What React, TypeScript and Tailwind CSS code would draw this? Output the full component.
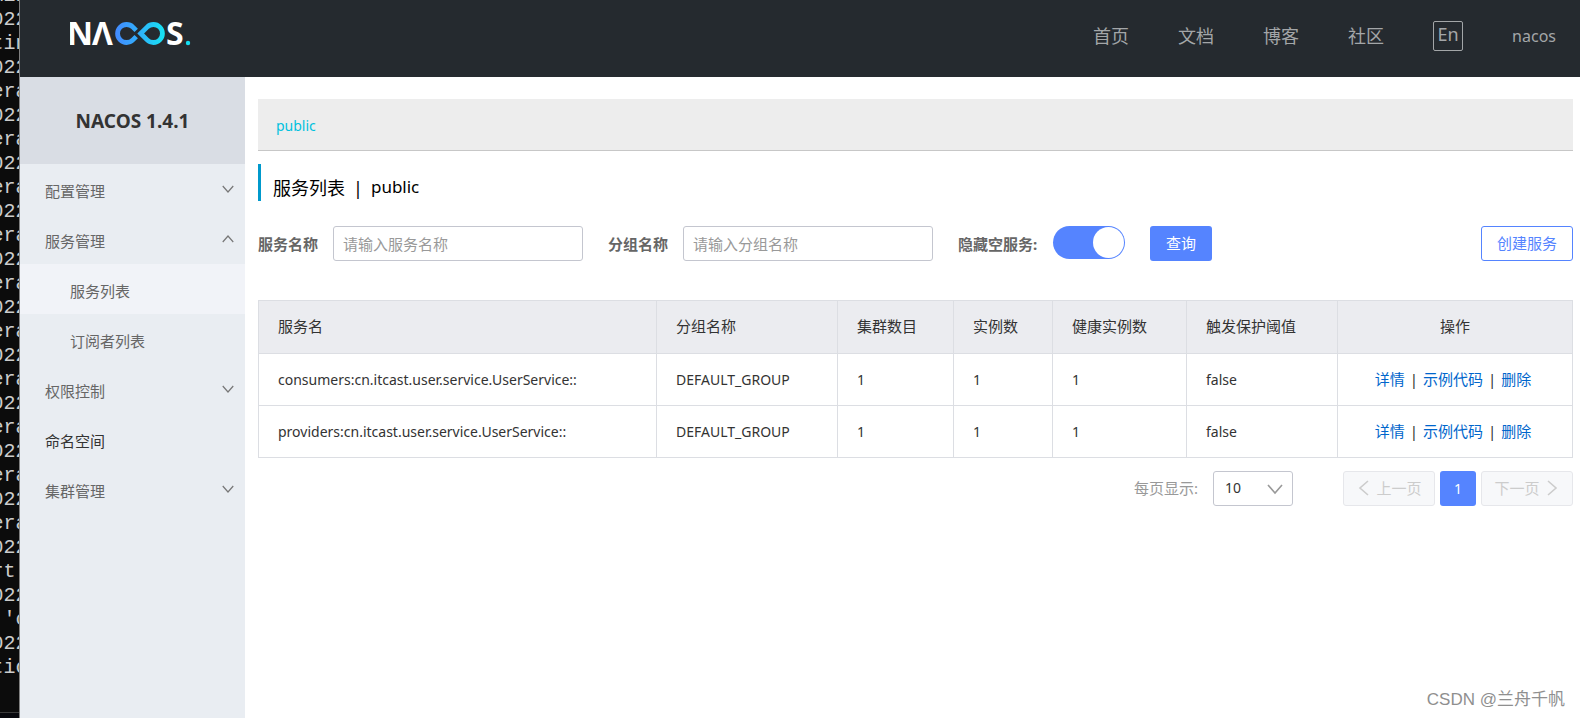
import { useState, type ReactNode } from "react";

const terminalLines = [
  "min", "022", "tin", "022", "era", "022", "era", "022", "era", "022", "era", "022", "era", "022", "era",
  "022", "era", "022", "era", "022", "era", "022", "era", "022", "rt ", "022", " 'c", "022", "tio",
];

const navLinks = ["首页", "文档", "博客", "社区"];

const services = [
  { name: "consumers:cn.itcast.user.service.UserService::", group: "DEFAULT_GROUP", clusters: 1, instances: 1, healthy: 1, protect: "false" },
  { name: "providers:cn.itcast.user.service.UserService::", group: "DEFAULT_GROUP", clusters: 1, instances: 1, healthy: 1, protect: "false" },
];

type Direction = "down" | "up" | "left" | "right";

const chevronPaths: Record<Direction, string> = {
  down: "M1 4 L8 12 L15 4",
  up: "M1 12 L8 4 L15 12",
  left: "M12 1 L4 8 L12 15",
  right: "M4 1 L12 8 L4 15",
};

function Chevron({ direction, className }: { direction: Direction; className: string }) {
  return (
    <svg viewBox="0 0 16 16" className={className} fill="none" stroke="currentColor" strokeWidth="1.6" aria-hidden="true">
      <path d={chevronPaths[direction]} />
    </svg>
  );
}

function Logo() {
  return (
    <svg viewBox="0 0 124 32" className="h-8 w-[124px]" role="img" aria-label="NACOS.">
      <defs>
        <linearGradient id="loop" gradientUnits="userSpaceOnUse" x1="45" y1="0" x2="95" y2="0">
          <stop offset="0" stopColor="#4489ff" />
          <stop offset="0.5" stopColor="#2fb2fb" />
          <stop offset="1" stopColor="#15e4f2" />
        </linearGradient>
      </defs>
      <g fill="#ffffff" fontFamily="'Open Sans', 'Noto Sans', sans-serif" fontWeight="700" fontSize="32">
        <text x="-3" y="27">N</text>
        <text x="22" y="27">Λ</text>
        <text x="96" y="27">S</text>
      </g>
      <g fill="none" stroke="url(#loop)" strokeWidth="4.8">
        <path d="M66.2 12.4 L62.9 9.1 A9 9 0 1 0 62.9 21.9 L66.2 18.6" />
        <path d="M70.7 15.5 L77.1 9.1 A9 9 0 1 1 77.1 21.9 Z" />
      </g>
      <circle cx="118" cy="25" r="2.2" fill="#15dff2" />
    </svg>
  );
}

function MenuItem({ children, direction, strong }: { children: ReactNode; direction?: Direction; strong?: boolean }) {
  return (
    <a href="#" className={`flex h-[50px] items-center justify-between pr-[11px] pl-[25px] ${strong ? "text-[#333333]" : "text-[#666666]"}`}>
      <span className="pt-1">{children}</span>
      {direction && <Chevron direction={direction} className="size-3 text-[#777777]" />}
    </a>
  );
}

function SubItem({ children, active }: { children: ReactNode; active?: boolean }) {
  return (
    <a href="#" className={`flex h-[50px] items-center pt-1 pl-[50px] text-[#666666] ${active ? "bg-[#f1f3f8]" : ""}`}>
      {children}
    </a>
  );
}

export default function App() {
  const [hideEmpty, setHideEmpty] = useState(true);
  const headCell = "border border-[#dcdee3] px-[19px] pb-0.5 text-left font-normal";
  const bodyCell = "border border-[#dcdee3] px-[19px] text-sm";
  const field = "h-[35px] w-[250px] rounded-[3px] border border-[#c4c6cf] bg-white px-[9px] outline-none placeholder:text-[#999999]";
  const pager = "flex h-[35px] w-[92px] items-center justify-center gap-1 rounded-[3px] border border-[#e6e7eb] bg-[#f7f8fa] pb-0.5 text-[#cccccc]";

  return (
    <div className="flex h-screen overflow-hidden bg-white font-['Noto_Sans','Noto_Sans_CJK_SC',sans-serif] text-[15px] leading-5 text-[#333333]">
      <div className="flex w-5 shrink-0 flex-col overflow-hidden border-r border-[#808080] bg-[#0c0c0c]" aria-hidden="true">
        <div className="-mt-4 flex flex-1 flex-col items-center font-['Liberation_Mono',monospace] text-xl leading-6 whitespace-pre text-[#cccccc]">
          {terminalLines.map((line, index) => (
            <span key={index}>{line}</span>
          ))}
        </div>
        <div className="h-1.5 border-t border-[#3a3a3a] bg-[#07080d]" />
      </div>

      <div className="flex min-w-0 flex-1 flex-col">
        <header className="flex h-[77px] shrink-0 items-start justify-between bg-[#252a2f] pr-6 pl-[50px] text-[#a3a6a8]">
          <a href="#" className="pt-[18px]"><Logo /></a>
          <nav className="flex h-[71px] items-center gap-[49px] text-lg">
            {navLinks.map((label) => (
              <a key={label} href="#">{label}</a>
            ))}
            <button type="button" className="flex size-[30px] items-center justify-center rounded-xs border border-[#a3a6a8] pb-1 leading-6">En</button>
            <a href="#" className="text-base">nacos</a>
          </nav>
        </header>

        <div className="flex min-h-0 flex-1">
          <aside className="w-[225px] shrink-0 bg-[#e9edf2]">
            <h1 className="flex h-[87px] items-center justify-center bg-[#d9dde4] text-[19px] font-bold">NACOS 1.4.1</h1>
            <nav>
              <MenuItem direction="down">配置管理</MenuItem>
              <MenuItem direction="up">服务管理</MenuItem>
              <SubItem active>服务列表</SubItem>
              <SubItem>订阅者列表</SubItem>
              <MenuItem direction="down">权限控制</MenuItem>
              <MenuItem strong>命名空间</MenuItem>
              <MenuItem direction="down">集群管理</MenuItem>
            </nav>
          </aside>

          <main className="relative min-w-0 flex-1 pt-[22px] pr-[7px] pl-[13px]">
            <div className="flex h-[52px] items-center border-b border-[#c7c7c7] bg-[#ededed] px-[18px] pt-0.5">
              <a href="#" className="text-sm text-[#00c1de]">public</a>
            </div>
            <h2 className="mt-[13px] flex h-[37px] items-center gap-2 border-l-3 border-[#0099cc] pt-2.5 pl-3 text-lg text-black">
              <span>服务列表</span>
              <span>|</span>
              <span className="text-[17px]">public</span>
            </h2>

            <form className="mt-[25px] flex items-center" onSubmit={(event) => event.preventDefault()}>
              <label htmlFor="service" className="w-[60px] font-bold text-[#666666]">服务名称</label>
              <input id="service" placeholder="请输入服务名称" className={`ml-[15px] ${field}`} />
              <label htmlFor="group" className="ml-[25px] w-[60px] font-bold text-[#666666]">分组名称</label>
              <input id="group" placeholder="请输入分组名称" className={`ml-[15px] ${field}`} />
              <label htmlFor="hide" className="ml-[25px] w-20 font-bold text-[#666666]">隐藏空服务:</label>
              <input
                id="hide"
                type="checkbox"
                role="switch"
                checked={hideEmpty}
                onChange={() => setHideEmpty(!hideEmpty)}
                className="mr-[25px] mb-0.5 ml-[15px] flex h-[33px] w-[72px] appearance-none items-center rounded-full bg-[#c4c6cf] px-px before:size-[31px] before:rounded-full before:bg-white checked:justify-end checked:bg-[#5584ff]"
              />
              <button type="submit" className="h-[35px] w-[62px] rounded-[3px] bg-[#5584ff] pb-0.5 text-white">查询</button>
              <button type="button" className="ml-auto h-[35px] w-[92px] rounded-[3px] border border-[#5584ff] pb-0.5 text-[#5584ff]">创建服务</button>
            </form>

            <table className="mt-[39px] w-full table-fixed border-collapse">
              <colgroup>
                <col />
                <col className="w-[181px]" />
                <col className="w-[116px]" />
                <col className="w-[99px]" />
                <col className="w-[134px]" />
                <col className="w-[151px]" />
                <col className="w-[235px]" />
              </colgroup>
              <thead>
                <tr className="h-[53px] bg-[#ebecf0]">
                  <th className={headCell}>服务名</th>
                  <th className={headCell}>分组名称</th>
                  <th className={headCell}>集群数目</th>
                  <th className={headCell}>实例数</th>
                  <th className={headCell}>健康实例数</th>
                  <th className={headCell}>触发保护阈值</th>
                  <th className="border border-[#dcdee3] pb-0.5 text-center font-normal">操作</th>
                </tr>
              </thead>
              <tbody>
                {services.map((service) => (
                  <tr key={service.name} className="h-[52px]">
                    <td className={bodyCell}>{service.name}</td>
                    <td className={bodyCell}>{service.group}</td>
                    <td className={bodyCell}>{service.clusters}</td>
                    <td className={bodyCell}>{service.instances}</td>
                    <td className={bodyCell}>{service.healthy}</td>
                    <td className={bodyCell}>{service.protect}</td>
                    <td className="border border-[#dcdee3] pr-1 pb-0.5">
                      <div className="flex justify-center gap-[5px]">
                        <a href="#" className="text-[#0066cc]">详情</a>
                        <span>|</span>
                        <a href="#" className="text-[#0066cc]">示例代码</a>
                        <span>|</span>
                        <a href="#" className="text-[#0066cc]">删除</a>
                      </div>
                    </td>
                  </tr>
                ))}
              </tbody>
            </table>

            <div className="mt-[13px] flex items-center justify-end">
              <label htmlFor="size" className="pb-0.5 text-[#999999]">每页显示:</label>
              <div className="relative mr-[50px] ml-[15px]">
                <select id="size" defaultValue="10" className="block h-[35px] w-20 appearance-none rounded-[3px] border border-[#c4c6cf] bg-white px-[11px] pb-0.5 text-sm outline-none">
                  <option>10</option>
                  <option>20</option>
                  <option>50</option>
                </select>
                <Chevron direction="down" className="pointer-events-none absolute top-2.5 right-2.5 size-4 text-[#999999]" />
              </div>
              <div className="flex gap-[5px]">
                <button type="button" disabled className={pager}>
                  <Chevron direction="left" className="size-4" />
                  上一页
                </button>
                <button type="button" className="h-[35px] w-9 rounded-[3px] bg-[#5584ff] text-sm text-white">1</button>
                <button type="button" disabled className={pager}>
                  下一页
                  <Chevron direction="right" className="size-4" />
                </button>
              </div>
            </div>

            <p className="absolute right-[15px] bottom-1.5 font-['Liberation_Sans','Noto_Sans_CJK_SC',sans-serif] text-[17px] leading-6 text-[#8f8f8f]">CSDN @兰舟千帆</p>
          </main>
        </div>
      </div>
    </div>
  );
}
